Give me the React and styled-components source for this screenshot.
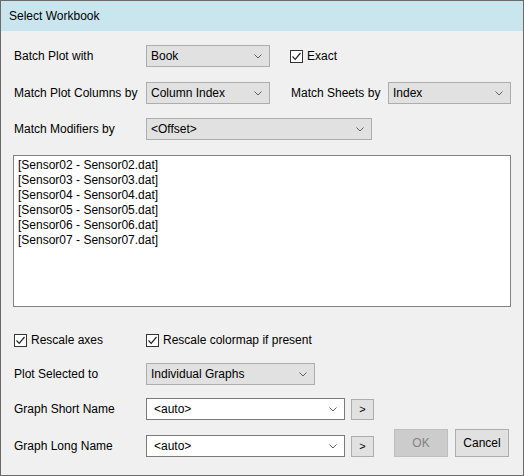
import React from "react";
import styled, { createGlobalStyle } from "styled-components";

const Global = createGlobalStyle`
  html, body { margin: 0; padding: 0; background: #f0f0f0; }
  * { box-sizing: border-box; }
`;

const Chevron = () => (
  <svg width="8" height="5" viewBox="0 0 8 5">
    <path d="M0.5 0.5 L4 4 L7.5 0.5" fill="none" stroke="#606060" strokeWidth="1" />
  </svg>
);

const Check = () => (
  <svg width="11" height="11" viewBox="0 0 11 11">
    <path d="M1.5 5.5 L4.2 8.3 L9.5 2" fill="none" stroke="#222" strokeWidth="1.2" />
  </svg>
);

const Window = styled.div`
  width: 524px;
  height: 476px;
  border: 1px solid #6a6a6a;
  background: #f0f0f0;
  font-family: "Liberation Sans", Arial, sans-serif;
  font-size: 12px;
  color: #000;
  display: flex;
  flex-direction: column;
`;

const TitleBar = styled.div`
  height: 30px;
  background: #c9e6ef;
  display: flex;
  align-items: center;
  padding-left: 8px;
  font-size: 12px;
`;

const Body = styled.div`
  flex: 1;
  padding: 14px 12px 0 12px;
  display: flex;
  flex-direction: column;
`;

const Row = styled.div`
  display: flex;
  align-items: center;
  height: 22px;
  margin-top: ${(p) => p.$gap || 0}px;
`;

const Label = styled.div`
  width: ${(p) => p.$w || 133}px;
  margin-left: ${(p) => p.$ml || 0}px;
  padding-left: 1px;
  white-space: nowrap;
`;

const Combo = styled.div`
  width: ${(p) => p.$w}px;
  height: 22px;
  display: flex;
  align-items: center;
  justify-content: space-between;
  padding: 0 7px 0 ${(p) => (p.$edit ? 7 : 4)}px;
  background: ${(p) => (p.$edit ? "#fff" : "#e1e1e1")};
  border: 1px solid ${(p) => (p.$edit ? "#7a7a7a" : "#adadad")};
  white-space: nowrap;
`;

const CheckWrap = styled.label`
  display: flex;
  align-items: center;
  gap: 4px;
  margin-left: ${(p) => p.$ml || 0}px;
  padding-left: ${(p) => p.$pl || 0}px;
  width: ${(p) => (p.$w ? p.$w + "px" : "auto")};
`;

const Box = styled.span`
  width: 13px;
  height: 13px;
  border: 1px solid #333;
  background: #fff;
  display: flex;
  align-items: center;
  justify-content: center;
`;

const ListBox = styled.div`
  margin-top: 15px;
  height: 152px;
  background: #fff;
  border: 1px solid #828282;
  padding: 2px 4px;
  line-height: 15px;
`;

const Bottom = styled.div`
  display: flex;
  align-items: flex-end;
  justify-content: space-between;
`;

const LeftCol = styled.div`
  display: flex;
  flex-direction: column;
`;

const SmallBtn = styled.div`
  width: 23px;
  height: 21px;
  margin-left: 6px;
  background: #e1e1e1;
  border: 1px solid #adadad;
  display: flex;
  align-items: center;
  justify-content: center;
  font-size: 11px;
`;

const Buttons = styled.div`
  display: flex;
  gap: 7px;
  margin-right: 2px;
`;

const Button = styled.div`
  width: 54px;
  height: 28px;
  display: flex;
  align-items: center;
  justify-content: center;
  background: ${(p) => (p.$disabled ? "#cccccc" : "#e1e1e1")};
  border: 1px solid ${(p) => (p.$disabled ? "#bfbfbf" : "#adadad")};
  color: ${(p) => (p.$disabled ? "#838383" : "#000")};
`;

const items = ["02", "03", "04", "05", "06", "07"];

export default function App() {
  return (
    <>
      <Global />
      <Window>
        <TitleBar>Select Workbook</TitleBar>
        <Body>
          <Row>
            <Label>Batch Plot with</Label>
            <Combo $w={124}>Book<Chevron /></Combo>
            <CheckWrap $ml={20}>
              <Box><Check /></Box>Exact
            </CheckWrap>
          </Row>
          <Row $gap={15}>
            <Label>Match Plot Columns by</Label>
            <Combo $w={124}>Column Index<Chevron /></Combo>
            <Label $w={98} $ml={20}>Match Sheets by</Label>
            <Combo $w={123}>Index<Chevron /></Combo>
          </Row>
          <Row $gap={14}>
            <Label>Match Modifiers by</Label>
            <Combo $w={226}>&lt;Offset&gt;<Chevron /></Combo>
          </Row>
          <ListBox>
            {items.map((n) => (
              <div key={n}>[Sensor{n} - Sensor{n}.dat]</div>
            ))}
          </ListBox>
          <Row $gap={22}>
            <CheckWrap $w={133} $pl={1}>
              <Box><Check /></Box>Rescale axes
            </CheckWrap>
            <CheckWrap>
              <Box><Check /></Box>Rescale colormap if present
            </CheckWrap>
          </Row>
          <Bottom>
            <LeftCol>
              <Row $gap={12}>
                <Label>Plot Selected to</Label>
                <Combo $w={169}>Individual Graphs<Chevron /></Combo>
              </Row>
              <Row $gap={13}>
                <Label>Graph Short Name</Label>
                <Combo $w={199} $edit>&lt;auto&gt;<Chevron /></Combo>
                <SmallBtn>&gt;</SmallBtn>
              </Row>
              <Row $gap={15}>
                <Label>Graph Long Name</Label>
                <Combo $w={199} $edit>&lt;auto&gt;<Chevron /></Combo>
                <SmallBtn>&gt;</SmallBtn>
              </Row>
            </LeftCol>
            <Buttons>
              <Button $disabled>OK</Button>
              <Button>Cancel</Button>
            </Buttons>
          </Bottom>
        </Body>
      </Window>
    </>
  );
}
